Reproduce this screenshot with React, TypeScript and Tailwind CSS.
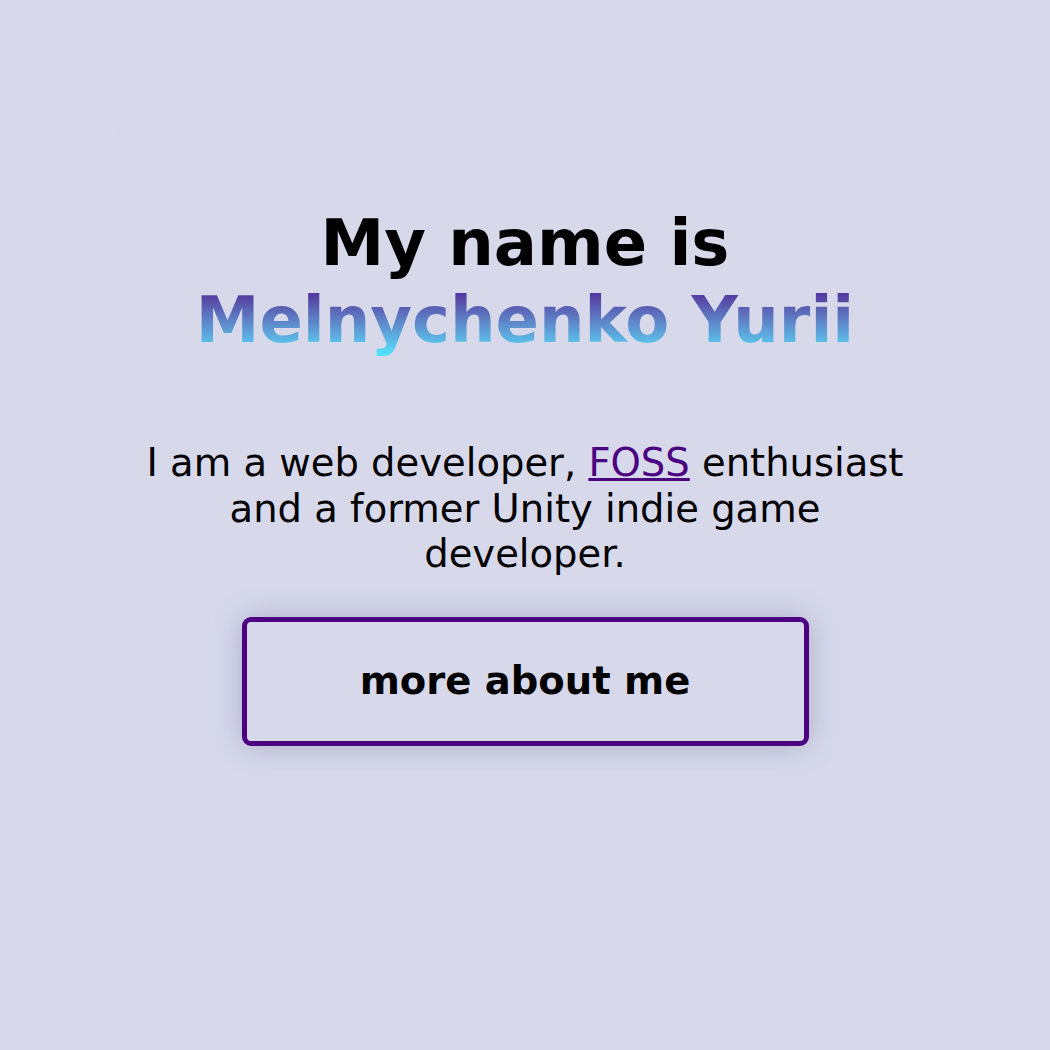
export default function App() {
  return (
    <div className="min-h-[1050px] bg-[#d7d9eb] font-['DejaVu_Sans',sans-serif] text-black">
      <div className="mx-auto h-[131px] w-[820px] shadow-[0_2px_2px_-1px_rgba(0,0,0,0.025)]" />
      <main className="mx-auto flex w-[820px] flex-col items-center pt-[74px] text-center">
        <h1 className="text-[64px] font-bold leading-[77px]">
          My name is
          <br />
          <span className="bg-gradient-to-b from-[#4b0a8c] to-[#4de8ff] bg-clip-text text-transparent">
            Melnychenko Yurii
          </span>
        </h1>
        <p className="mt-[81px] w-[790px] text-[38.5px] leading-[45.5px]">
          I am a web developer,{" "}
          <a href="#" className="text-[#4b0082] underline">
            FOSS
          </a>{" "}
          enthusiast and a former Unity indie game developer.
        </p>
        <button className="mt-[40px] h-[129px] w-[567px] rounded-[9px] border-[5px] border-[#4b0082] text-[38.5px] font-bold shadow-[0_0_30px_rgba(60,60,110,0.28)]">
          more about me
        </button>
      </main>
    </div>
  );
}
